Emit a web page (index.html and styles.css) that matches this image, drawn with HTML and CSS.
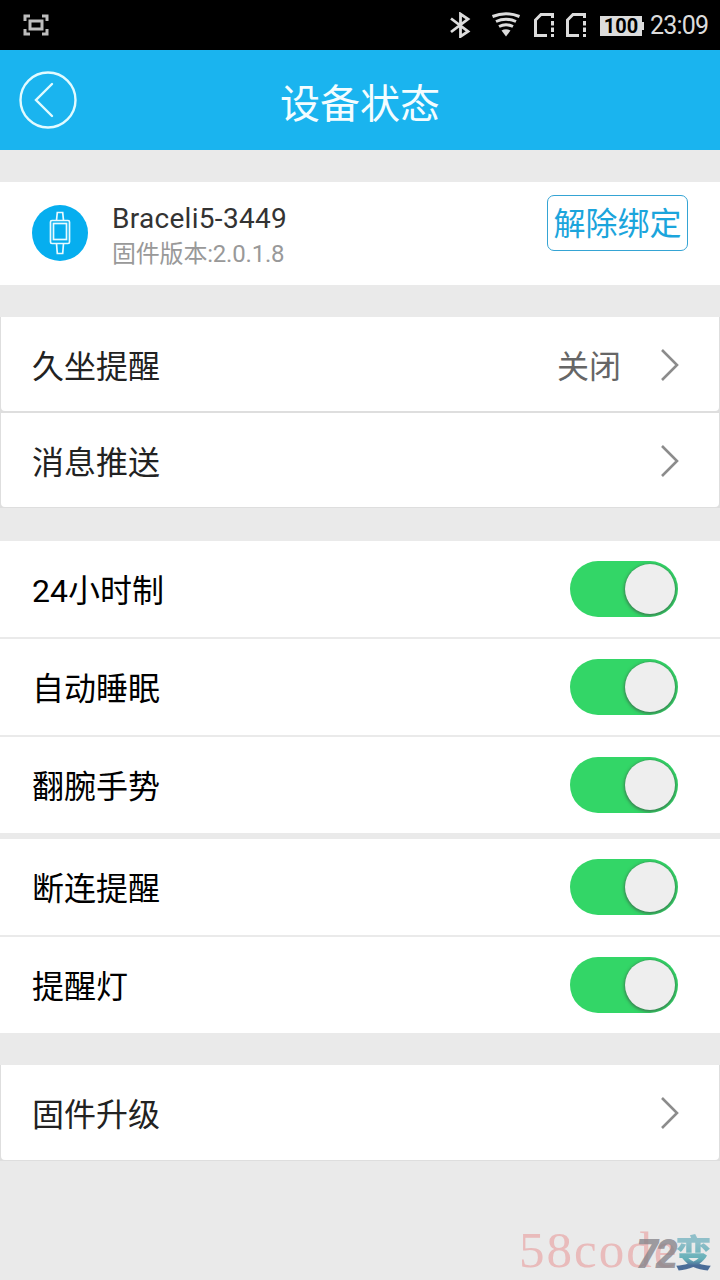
FILE: index.html
```html
<!DOCTYPE html>
<html lang="zh-CN">

<head>
    <meta charset="UTF-8">
    <meta name="viewport" content="width=device-width, initial-scale=1.0">
    <title>设备状态</title>
    <link rel="stylesheet" href="styles.css">
</head>

<body>
    <div class="app">
        <!-- 系统状态栏 -->
        <div class="status-bar">
            <svg class="icon-capture" width="26" height="22" viewBox="0 0 26 22">
                <path d="M2 7V2h5M19 2h5v5M24 15v5h-5M7 20H2v-5" />
                <rect x="7" y="7" width="12" height="8" />
            </svg>
            <div class="status-icons">
                <svg class="icon-bluetooth" width="22" height="26" viewBox="0 0 22 26">
                    <path d="M2 6.500l17 13-7.500 5V2l7.500 5L2 20" />
                </svg>
                <svg class="icon-wifi" width="30" height="26" viewBox="0 0 30 26">
                    <path d="M1.500 4.500Q15-1 28.500 4.500M5 9.500Q15 5 25 9.500M8 14.500Q15 11 22 14.500" />
                    <path class="dot" d="M10.500 18.500Q15 16 19.500 18.500L15 24.500z" />
                </svg>
                <svg class="icon-sim" width="22" height="26" viewBox="0 0 22 26">
                    <path d="M14 23.500H2.500V8L8 2.500h11.500V6M19.500 9v4.500M19.500 15.500v4.500M19.500 22v3" />
                </svg>
                <svg class="icon-sim" width="22" height="26" viewBox="0 0 22 26">
                    <path d="M14 23.500H2.500V8L8 2.500h11.500V6M19.500 9v4.500M19.500 15.500v4.500M19.500 22v3" />
                </svg>
                <div class="battery">100</div>
                <div class="clock">23:09</div>
            </div>
        </div>

        <!-- 标题栏 -->
        <div class="header">
            <svg class="back" width="58" height="58" viewBox="0 0 58 58">
                <circle cx="29" cy="29" r="27.500" />
                <path d="M33 13L17 29l16 16" />
            </svg>
            <h1>设备状态</h1>
        </div>

        <!-- 设备信息 -->
        <div class="device">
            <svg class="device-icon" width="56" height="56" viewBox="0 0 56 56">
                <circle cx="28" cy="28" r="28" />
                <path d="M24.500 15.500l.8-8h5.400l.8 8M24.500 38.500l.8 10h5.400l.8-10" />
                <rect x="18.500" y="15.500" width="19" height="23" rx="1.500" />
                <rect x="21.500" y="18.500" width="13" height="16" />
            </svg>
            <div class="device-info">
                <div class="device-name">Braceli5-3449</div>
                <div class="device-version">固件版本:2.0.1.8</div>
            </div>
            <div class="unbind">解除绑定</div>
        </div>

        <div class="link-list">
            <div class="link-item">
                <span>久坐提醒</span>
                <span class="value">关闭</span>
                <svg class="arrow" width="20" height="34" viewBox="0 0 20 34"><path d="M2 2l15 15L2 32" /></svg>
            </div>
            <div class="link-item">
                <span>消息推送</span>
                <svg class="arrow" width="20" height="34" viewBox="0 0 20 34"><path d="M2 2l15 15L2 32" /></svg>
            </div>
        </div>

        <!-- 开关 -->
        <div class="switch-list">
            <div class="switch-item"><span>24小时制</span><div class="switch"></div></div>
            <div class="switch-item"><span>自动睡眠</span><div class="switch"></div></div>
            <div class="switch-item"><span>翻腕手势</span><div class="switch"></div></div>
        </div>
        <div class="switch-list second">
            <div class="switch-item"><span>断连提醒</span><div class="switch"></div></div>
            <div class="switch-item"><span>提醒灯</span><div class="switch"></div></div>
        </div>

        <div class="link-list upgrade">
            <div class="link-item">
                <span>固件升级</span>
                <svg class="arrow" width="20" height="34" viewBox="0 0 20 34"><path d="M2 2l15 15L2 32" /></svg>
            </div>
        </div>

        <!-- 水印 -->
        <div class="watermark">58code</div>
        <div class="watermark-logo"><span class="num">72</span><span class="bian">变</span></div>
    </div>
</body>

</html>
```
FILE: styles.css
```css
:root {
    --blue: #1AB4EF;
    --page: #EAEAEA;
    --green: #33D667;
    --status: #DCDCDC;
}

* {
    margin: 0;
    padding: 0;
    box-sizing: border-box;
}

body {
    background: var(--page);
    font-family: Roboto, "Noto Sans CJK SC", sans-serif;
}

svg {
    display: block;
    fill: none;
    flex-shrink: 0;
}

.app {
    position: relative;
    width: 720px;
    height: 1280px;
    overflow: hidden;
}

/* 系统状态栏 */
.status-bar {
    height: 50px;
    padding: 0 12px 0 23px;
    background: #000;
    display: flex;
    align-items: center;
    justify-content: space-between;
}

.status-bar svg {
    stroke: var(--status);
    stroke-width: 3;
}

.status-bar .icon-capture {
    stroke: #BDBDBD;
}

.status-icons {
    display: flex;
    align-items: center;
}

.status-bar .icon-bluetooth {
    stroke-width: 2.8;
}

.icon-wifi {
    margin-left: 20px;
}

.icon-wifi .dot {
    fill: var(--status);
    stroke: none;
}

.icon-sim {
    margin-left: 10px;
}

.icon-wifi + .icon-sim {
    margin-left: 12px;
}

.battery {
    position: relative;
    width: 42px;
    height: 20px;
    margin: 1px 0 0 13px;
    background: var(--status);
    color: #000;
    font-size: 20px;
    font-weight: bold;
    line-height: 21px;
    text-align: center;
}

.battery::after {
    content: "";
    position: absolute;
    left: 42px;
    top: 6px;
    width: 2px;
    height: 8px;
    background: var(--status);
}

.clock {
    width: 58px;
    margin-left: 8px;
    padding-top: 2px;
    color: var(--status);
    font-size: 25px;
    line-height: 30px;
    letter-spacing: -0.8px;
    white-space: nowrap;
}

/* 标题栏 */
.header {
    height: 100px;
    padding: 0 19px;
    background: var(--blue);
    display: flex;
    align-items: center;
}

.back {
    margin-top: -1px;
    stroke: #E2FBFF;
    stroke-width: 2.4;
    stroke-linecap: round;
}

.header h1 {
    flex: 1;
    margin-right: 58px;
    padding-top: 1px;
    color: #F4FDFF;
    font-size: 40px;
    font-weight: normal;
    text-align: center;
}

/* 设备信息 */
.device {
    height: 103px;
    margin-top: 32px;
    padding: 0 32px;
    background: #FFF;
    display: flex;
    align-items: center;
}

.device-icon {
    margin-bottom: 1px;
    stroke: #E8FAFF;
    stroke-width: 1.7;
}

.device-icon circle {
    fill: #06AEEF;
    stroke: none;
}

.device-info {
    flex: 1;
    margin-left: 24px;
    padding-top: 6px;
}

.device-name {
    color: #333;
    font-size: 28px;
    line-height: 34px;
    letter-spacing: 0.3px;
}

.device-version {
    color: #999;
    font-size: 24px;
    line-height: 36px;
    letter-spacing: -0.2px;
}

.unbind {
    width: 141px;
    height: 56px;
    margin-bottom: 22px;
    border: 1.5px solid #35A4D4;
    border-radius: 7px;
    color: #1BA5DC;
    font-size: 32px;
    line-height: 56px;
    text-align: center;
}

/* 跳转项 */
.link-list {
    margin-top: 32px;
    background: #DEDEDE;
    border-bottom: 1px solid #DEDEDE;
    padding: 0 1px;
    display: flex;
    flex-direction: column;
    gap: 2px;
}

.link-item {
    height: 94px;
    padding: 0 39px 0 31px;
    background: #FFF;
    border-radius: 0 0 4px 4px;
    display: flex;
    align-items: center;
    color: #222;
    font-size: 32px;
}

.link-item .value {
    margin-left: auto;
    color: #666;
}

.arrow {
    margin-top: 2px;
    margin-left: auto;
    stroke: #8C8C8C;
    stroke-width: 2.6;
}

.value + .arrow {
    margin-left: 39px;
}

/* 开关项 */
.switch-list {
    margin-top: 33px;
    display: flex;
    flex-direction: column;
    gap: 2px;
}

.switch-list.second {
    margin-top: 6px;
}

.switch-item {
    height: 96px;
    padding: 0 42px 0 32px;
    background: #FFF;
    display: flex;
    align-items: center;
    justify-content: space-between;
    color: #000;
    font-size: 32px;
}

.switch-item span {
    margin-bottom: 2px;
}

.switch {
    width: 108px;
    height: 56px;
    padding: 3px;
    border-radius: 28px;
    background: var(--green);
    display: flex;
    justify-content: flex-end;
    overflow: hidden;
}

.switch::after {
    content: "";
    width: 50px;
    height: 50px;
    border-radius: 50%;
    background: #EEE;
    box-shadow: 0 1px 3px 1px rgba(60, 90, 70, 0.65);
}

.upgrade .link-item {
    height: 95px;
    padding-bottom: 2px;
}

/* 水印 */
.watermark {
    position: absolute;
    left: 519px;
    top: 1222px;
    color: rgba(232, 140, 140, 0.5);
    font-family: "Liberation Serif", serif;
    font-size: 51px;
    line-height: 56px;
    letter-spacing: 2px;
}

.watermark-logo {
    position: absolute;
    left: 636px;
    top: 1234px;
    height: 42px;
    display: flex;
    align-items: center;
    font-weight: 900;
    line-height: 42px;
}

.watermark-logo .num {
    width: 39px;
    color: rgba(135, 132, 138, 0.8);
    font-size: 40px;
    font-style: italic;
    letter-spacing: -3px;
}

.watermark-logo .bian {
    font-size: 37px;
    color: transparent;
    background: linear-gradient(#8FBFC9 20%, #66B0B8 60%, #4A6C98 75%);
    -webkit-background-clip: text;
    background-clip: text;
}
```
